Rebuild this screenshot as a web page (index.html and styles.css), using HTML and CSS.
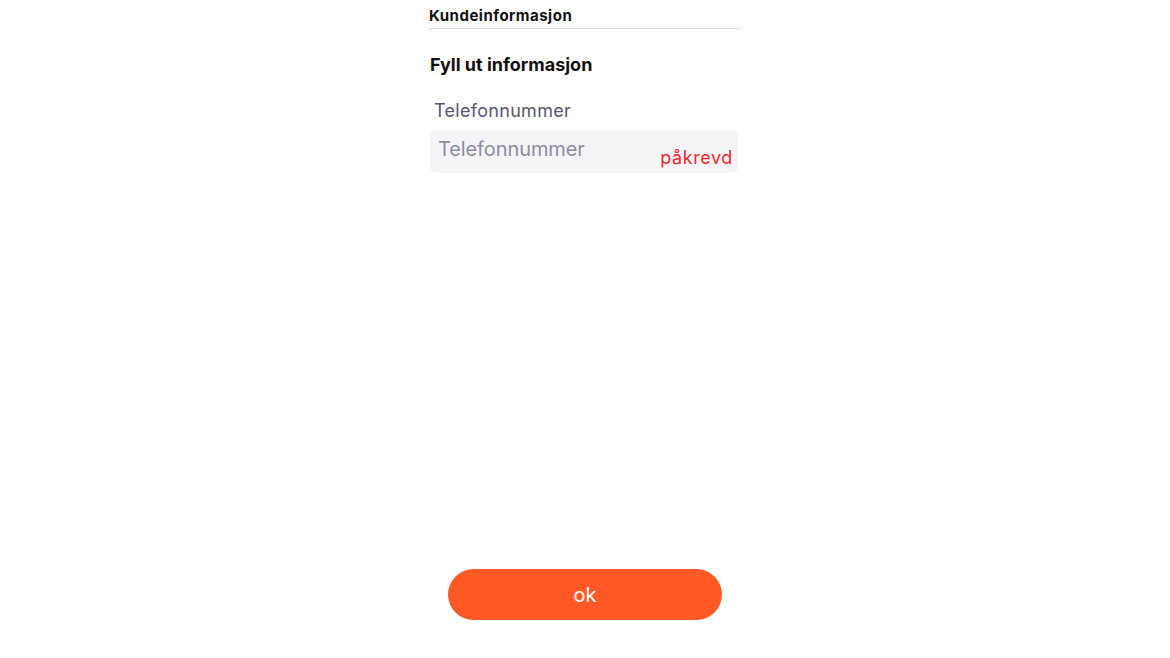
FILE: index.html
```html
<!DOCTYPE html>
<html lang="no">
<head>
<meta charset="utf-8">
<title>Kundeinformasjon</title>
<link rel="stylesheet" href="styles.css">
</head>
<body>
<div class="page">
  <div class="header">Kundeinformasjon</div>
  <h2 class="title">Fyll ut informasjon</h2>
  <label class="label" for="tel">Telefonnummer</label>
  <div class="field">
    <input id="tel" class="input" type="text" placeholder="Telefonnummer">
    <span class="required">påkrevd</span>
  </div>
  <div class="spacer"></div>
  <button class="ok" type="button">ok</button>
</div>
</body>
</html>
```
FILE: styles.css
```css
html, body {
  margin: 0;
  padding: 0;
  background: #fff;
}
body {
  font-family: Inter, "Noto Sans", sans-serif;
  color: #111;
}
.page {
  width: 310px;
  height: 658px;
  margin: 0 auto;
  display: flex;
  flex-direction: column;
  box-sizing: border-box;
}
.header {
  font-size: 15px;
  font-weight: 700;
  letter-spacing: 0.5px;
  margin-left: -1px;
  padding-top: 6px;
  height: 22px;
  border-bottom: 1px solid #d8d6de;
}
.title {
  margin: 24px 0 0 0;
  font-size: 18px;
  font-weight: 700;
  letter-spacing: 0;
  line-height: 24px;
}
.label {
  margin: 22px 0 0 4px;
  font-size: 18px;
  color: #5a5672;
  line-height: 24px;
  letter-spacing: 0.3px;
}
.field {
  margin-top: 7px;
  height: 43px;
  width: 308px;
  background: #f5f5f8;
  border-radius: 6px;
  display: flex;
  align-items: flex-start;
  justify-content: space-between;
  box-sizing: border-box;
  padding: 0 5px 0 8px;
}
.input {
  border: 0;
  background: transparent;
  outline: none;
  font-family: inherit;
  font-size: 20px;
  color: #333;
  padding: 0;
  margin-top: 7px;
  width: 200px;
  letter-spacing: -0.1px;
}
.input::placeholder {
  color: #8e8ba0;
}
.required {
  color: #f2262b;
  font-size: 18px;
  margin-top: 18px;
  line-height: 20px;
  letter-spacing: 0.6px;
}
.spacer {
  flex: 1;
}
.ok {
  align-self: center;
  margin: 0 0 38px 0;
  width: 274px;
  height: 51px;
  border: 0;
  border-radius: 26px;
  background: #ff5a26;
  color: #fff;
  font-family: inherit;
  font-size: 20px;
  font-weight: 400;
}
```
